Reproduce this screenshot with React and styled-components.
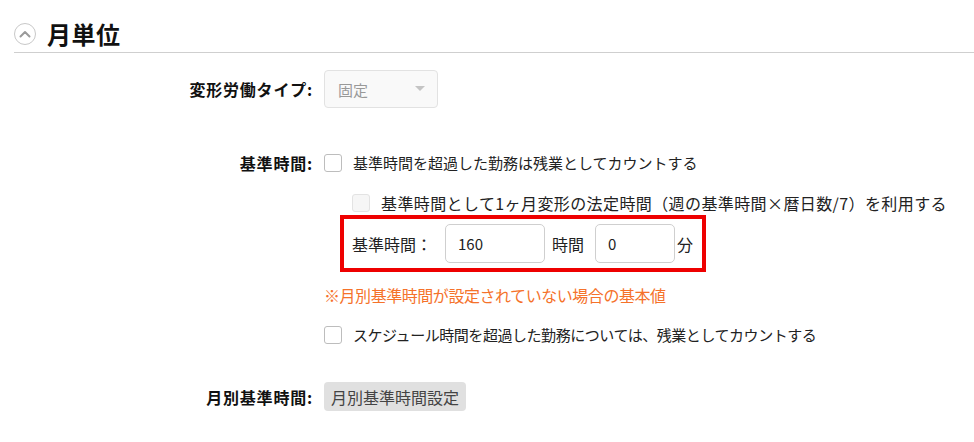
import React from 'react';
import styled, { createGlobalStyle } from 'styled-components';

const GlobalStyle = createGlobalStyle`
  body {
    margin: 0;
    background: #fff;
    font-family: "Noto Sans CJK JP", "Noto Sans", sans-serif;
    color: #222;
    text-spacing-trim: space-all;
  }
`;

function App() {
    return (
        <>
            <GlobalStyle />
            <Page>
                <Header>
                    <Toggle>
                        <svg width="12" height="8" viewBox="0 0 12 8">
                            <path d="M1.5 6.5 L6 2 L10.5 6.5" fill="none" stroke="#9a9a9a" strokeWidth="2" strokeLinecap="round" strokeLinejoin="round" />
                        </svg>
                    </Toggle>
                    <Title>月単位</Title>
                </Header>

                <Form>
                    <Row $top={17}>
                        <Label>変形労働タイプ:</Label>
                        <Select>
                            <span>固定</span>
                            <Caret />
                        </Select>
                    </Row>

                    <Row $top={45} $align="flex-start">
                        <Label>基準時間:</Label>
                        <Stack>
                            <CheckLine>
                                <Box />
                                <span>基準時間を超過した勤務は残業としてカウントする</span>
                            </CheckLine>
                            <SubCheck>
                                <Box $disabled />
                                <span>基準時間として1ヶ月変形の法定時間（週の基準時間×暦日数/7）を利用する</span>
                            </SubCheck>
                            <Highlight>
                                <InlineLabel>基準時間：</InlineLabel>
                                <Input $w={100} $ml={13} defaultValue="160" />
                                <Unit $ml={7}>時間</Unit>
                                <Input $w={80} $ml={11} defaultValue="0" />
                                <Unit $ml={2}>分</Unit>
                            </Highlight>
                            <Note>※月別基準時間が設定されていない場合の基本値</Note>
                            <CheckLine $mt={20} $ls={-0.45}>
                                <Box />
                                <span>スケジュール時間を超過した勤務については、残業としてカウントする</span>
                            </CheckLine>
                        </Stack>
                    </Row>

                    <Row $top={37}>
                        <Label>月別基準時間:</Label>
                        <Button>月別基準時間設定</Button>
                    </Row>
                </Form>
            </Page>
        </>
    );
}

const Page = styled.div`
    padding: 16px 0 0 14px;
`;

const Header = styled.div`
    display: flex;
    align-items: center;
    gap: 11px;
    height: 36px;
    border-bottom: 1px solid #cfcfcf;
`;

const Toggle = styled.div`
    width: 22px;
    height: 22px;
    border: 1.5px solid #c8c8c8;
    border-radius: 50%;
    display: flex;
    align-items: center;
    justify-content: center;
    box-sizing: border-box;
`;

const Title = styled.h2`
    margin: 0;
    font-size: 24px;
    font-weight: 700;
    color: #111;
    line-height: 36px;
    letter-spacing: 0.5px;
`;

const Form = styled.div`
    display: flex;
    flex-direction: column;
`;

const Row = styled.div`
    display: flex;
    align-items: ${p => p.$align || 'center'};
    gap: 11px;
    margin-top: ${p => p.$top}px;
`;

const Label = styled.div`
    width: 299px;
    text-align: right;
    font-size: 16px;
    font-weight: 700;
    letter-spacing: 0.8px;
    color: #111;
    white-space: nowrap;
    line-height: 20px;
`;

const Select = styled.div`
    width: 114px;
    height: 38px;
    box-sizing: border-box;
    border: 1px solid #e2e2e2;
    border-radius: 4px;
    background: #f9f9f9;
    display: flex;
    align-items: center;
    justify-content: space-between;
    padding: 0 12px 0 13px;
    font-size: 15px;
    color: #999;
`;

const Caret = styled.div`
    width: 0;
    height: 0;
    border-left: 5px solid transparent;
    border-right: 5px solid transparent;
    border-top: 5px solid #c4c4c4;
    margin-top: -2px;
`;

const Stack = styled.div`
    display: flex;
    flex-direction: column;
`;

const CheckLine = styled.label`
    display: flex;
    align-items: center;
    gap: 11px;
    font-size: 15px;
    line-height: 20px;
    letter-spacing: ${p => p.$ls || 0}px;
    color: #222;
    white-space: nowrap;
    margin-top: ${p => p.$mt || 0}px;
`;

const SubCheck = styled(CheckLine)`
    margin-top: 20px;
    padding-left: 28px;
    font-size: 16px;
    letter-spacing: 0.4px;
`;

const Box = styled.span`
    width: 18px;
    height: 18px;
    box-sizing: border-box;
    border: 1px solid ${p => (p.$disabled ? '#e3e3e3' : '#bdbdbd')};
    background: ${p => (p.$disabled ? '#f6f6f6' : '#fff')};
    border-radius: 3px;
    flex: none;
`;

const Highlight = styled.div`
    display: flex;
    align-items: center;
    width: 366px;
    height: 57px;
    box-sizing: border-box;
    margin: 2px 0 0 16px;
    border: 4px solid #ee0000;
    padding: 0 8px;
    font-size: 15px;
    color: #222;
    white-space: nowrap;
`;

const InlineLabel = styled.span`
    font-size: 16px;
`;

const Unit = styled.span`
    margin-left: ${p => p.$ml}px;
    font-size: 16px;
`;

const Input = styled.input`
    width: ${p => p.$w}px;
    height: 39px;
    box-sizing: border-box;
    border: 1px solid #cfcfcf;
    border-radius: 5px;
    padding: 0 12px;
    font-family: inherit;
    font-size: 15px;
    color: #222;
    outline: none;
    margin-left: ${p => p.$ml}px;
`;

const Note = styled.div`
    margin-top: 13px;
    font-size: 16px;
    letter-spacing: -0.45px;
    line-height: 20px;
    color: #f5722a;
    white-space: nowrap;
`;

const Button = styled.button`
    height: 29px;
    padding: 0 7px;
    border: none;
    border-radius: 4px;
    background: #e0e0e0;
    color: #444;
    font-family: inherit;
    font-size: 16px;
    cursor: pointer;
`;

export default App;
